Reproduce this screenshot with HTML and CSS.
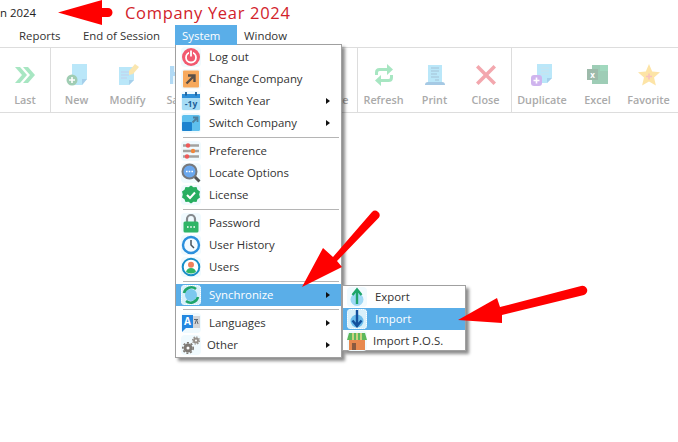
FILE: index.html
```html
<!DOCTYPE html>
<html lang="en">
<head>
  <meta charset="UTF-8">
  <title>Company Year 2024</title>
  <link rel="stylesheet" href="styles.css">
</head>
<body>

  <!-- TITLE -->
  <header class="title-row">
    <span class="title-text">n 2024</span>
    <span class="note">Company Year 2024</span>
  </header>

  <!-- MENU BAR -->
  <nav class="menubar">
    <a class="menu-reports">Reports</a>
    <a class="menu-session">End of Session</a>
    <a class="menu-system active">System</a>
    <a class="menu-window">Window</a>
  </nav>

  <!-- TOOLBAR -->
  <section class="toolbar">
    <div class="group group-last">
      <div class="tool">
        <svg viewBox="0 0 22 22"><path d="M1 3h5l7 8-7 8H1l7-8zM9 3h5l7 8-7 8H9l7-8z" fill="#2fc46f"/></svg>
        <span>Last</span>
      </div>
    </div>
    <div class="group group-edit">
      <div class="tool">
        <svg viewBox="0 0 22 22"><path d="M6 0h15v15l-5 6H6z" fill="#5cc8f2"/><path d="M16 21v-6h5z" fill="#2e8fd0"/><circle cx="6" cy="16" r="5.500" fill="#1f8a4c"/><path d="M3 16h6M6 13v6" stroke="#fff" stroke-width="1.600"/></svg>
        <span>New</span>
      </div>
      <div class="tool">
        <svg viewBox="0 0 22 22"><path d="M2 3h15v13l-5 5H2z" fill="#5cc8f2"/><path d="M12 21v-5h5z" fill="#2e8fd0"/><path d="M4 8h8M4 11h8M4 14h6" stroke="#6f8fd0" stroke-width="1.200"/><path d="M12 7l6-7 4 3-6 7-4 1z" fill="#f4c542"/></svg>
        <span>Modify</span>
      </div>
      <div class="tool">
        <svg viewBox="0 0 22 22"><path d="M2 2h15l3 3v15H2z" fill="#4aa8e8"/><path d="M6 2h9v6H6zM5 12h12v8H5z" fill="#d5effb"/></svg>
        <span>Save</span>
      </div>
      <div class="tool"></div>
      <div class="tool"></div>
      <div class="tool">
        <svg viewBox="0 0 22 22"><path d="M4 5h14l-2 16H6z" fill="#e66"/></svg>
        <span>Delete</span>
      </div>
    </div>
    <div class="group group-view">
      <div class="tool">
        <svg viewBox="0 0 22 22"><path d="M3.500 11V8.500q0-3 3-3H15M18.500 11v2.500q0 3-3 3H7" fill="none" stroke="#2fc46f" stroke-width="3"/><path d="M14 0l6 5.500-6 5.500zM8 11l-6 5.500L8 22z" fill="#2fc46f"/></svg>
        <span>Refresh</span>
      </div>
      <div class="tool">
        <svg viewBox="0 0 22 22"><path d="M4 1h14v17H4z" fill="#5cc8f2"/><path d="M7 4h8M7 7h8M7 10h6M7 13h8M11 16h4" stroke="#2b6f9b" stroke-width="1.100"/><path d="M1 21q0-3 3-3h14q3 0 3 3z" fill="#2a7fc0"/></svg>
        <span>Print</span>
      </div>
      <div class="tool">
        <svg viewBox="0 0 22 22"><path d="M3.500 1L11 8.500 18.500 1 21 3.500 13.500 11 21 18.500 18.500 21 11 13.500 3.500 21 1 18.500 8.500 11 1 3.500z" fill="#e4303f"/></svg>
        <span>Close</span>
      </div>
    </div>
    <div class="group group-extra">
      <div class="tool wide">
        <svg viewBox="0 0 22 22"><path d="M6 0h15v14l-5 5H6z" fill="#5cc8f2"/><path d="M16 19v-5h5z" fill="#2e8fd0"/><path d="M10 4h8M10 7h8M10 10h8" stroke="#8ab8cf" stroke-width="1.100"/><rect x="0" y="11" width="11" height="11" rx="3" fill="#8f4fd8"/><path d="M2.500 16.500h6M5.500 13.500v6" stroke="#fff" stroke-width="1.600"/></svg>
        <span>Duplicate</span>
      </div>
      <div class="tool">
        <svg viewBox="0 0 22 22"><path d="M5 1h16v19H5z" fill="#1a8a54"/><path d="M13 1h8v6h-8z" fill="#21a366"/><rect x="0" y="5" width="11" height="11" fill="#185c37"/><text x="5.500" y="13.500" class="xl">x</text></svg>
        <span>Excel</span>
      </div>
      <div class="tool">
        <svg viewBox="0 0 22 22"><path d="M11 0l3.200 7.500 7.800.8-6 5.200 1.900 7.900L11 17.500 4.100 21.400 6 13.500 0 8.300l7.800-.8z" fill="#fbc02d"/><path d="M8 12.500h6M11 9.500v6" stroke="#ef6b6b" stroke-width="1.600"/></svg>
        <span>Favorite</span>
      </div>
    </div>
  </section>

  <!-- SYSTEM MENU -->
  <div class="dropdown system-menu">
    <div class="item">
      <svg viewBox="0 0 20 20"><circle cx="10" cy="10" r="9" fill="#f2596f"/><circle cx="10" cy="10.500" r="5" fill="none" stroke="#fff" stroke-width="1.800"/><path d="M10 3.500v6" stroke="#f2596f" stroke-width="4"/><path d="M10 3.500v6" stroke="#fff" stroke-width="1.800"/></svg>
      <span>Log out</span>
    </div>
    <div class="item">
      <svg viewBox="0 0 20 20"><rect x="2" y="1.500" width="16" height="17" rx="1" fill="#f7a95c"/><path d="M5.500 14.500l7-7M7 6.500h6.500V13" fill="none" stroke="#5a5048" stroke-width="2.400"/></svg>
      <span>Change Company</span>
    </div>
    <div class="item sub">
      <svg viewBox="0 0 20 20"><rect x="1" y="3" width="18" height="16" rx="1" fill="#a6dcf5"/><rect x="1" y="3" width="18" height="4" fill="#2e8fd8"/><path d="M5 1v3.500M15 1v3.500" stroke="#1d5f98" stroke-width="1.800"/><text x="10" y="16" class="cal">-1y</text></svg>
      <span>Switch Year</span>
    </div>
    <div class="item sub">
      <svg viewBox="0 0 20 20"><rect x="1" y="2" width="18" height="16" rx="1.500" fill="#5fc0ee"/><rect x="1" y="9" width="10" height="9" rx="1" fill="#1c82cf"/><path d="M11.500 9.500l4-4M12 4.500h4.500V9" fill="none" stroke="#4f7f9c" stroke-width="1.800"/></svg>
      <span>Switch Company</span>
    </div>
    <hr>
    <div class="item">
      <svg viewBox="0 0 20 20"><path d="M2 4.500h16M2 10h16M2 15.500h16" stroke="#a3a3a0" stroke-width="2.400"/><circle cx="7" cy="4.500" r="2.200" fill="#ef5a5a"/><circle cx="12" cy="10" r="2.200" fill="#f0883c"/><circle cx="6" cy="15.500" r="2.200" fill="#ef5a5a"/></svg>
      <span>Preference</span>
    </div>
    <div class="item">
      <svg viewBox="0 0 20 20"><path d="M12.500 12.500l6 6" stroke="#555" stroke-width="3"/><circle cx="8.500" cy="8.500" r="7" fill="#6aa8ee" stroke="#77797c" stroke-width="2"/><path d="M5 8.500h7" stroke="#fff" stroke-width="1.600" stroke-dasharray="1.600 1.100"/></svg>
      <span>Locate Options</span>
    </div>
    <div class="item">
      <svg viewBox="0 0 20 20"><path d="M10 .5l2.500 1.700 3-.2 1 2.800 2.500 1.700-.8 3 .8 3-2.500 1.700-1 2.800-3-.2-2.500 1.700-2.500-1.700-3 .2-1-2.800L1 12.500l.8-3L1 6.500l2.500-1.700 1-2.800 3 .2z" fill="#27ae60"/><path d="M6 10l3 3 5-5.500" fill="none" stroke="#fff" stroke-width="2"/></svg>
      <span>License</span>
    </div>
    <hr>
    <div class="item">
      <svg viewBox="0 0 20 20"><path d="M6 9V6a4 4 0 0 1 8 0v3" fill="none" stroke="#85898c" stroke-width="2.200"/><rect x="2.500" y="8.500" width="15" height="11" rx="1.500" fill="#2fb567"/><path d="M6 14h8" stroke="#fff" stroke-width="1.600" stroke-dasharray="1.600 1.600"/></svg>
      <span>Password</span>
    </div>
    <div class="item">
      <svg viewBox="0 0 20 20"><circle cx="10" cy="10" r="8" fill="#f4fbff" stroke="#2b8fdc" stroke-width="2.400"/><path d="M10 5v5l3 3" fill="none" stroke="#47515a" stroke-width="1.500"/></svg>
      <span>User History</span>
    </div>
    <div class="item">
      <svg viewBox="0 0 20 20"><circle cx="10" cy="10" r="8.300" fill="#fff" stroke="#1a8fc7" stroke-width="2"/><circle cx="10" cy="7.800" r="3" fill="#f0805a"/><path d="M5 15q1-4 5-4t5 4q-5 3-10 0z" fill="#2fb567"/></svg>
      <span>Users</span>
    </div>
    <hr>
    <div class="item sub active">
      <svg class="halo" viewBox="0 0 20 20"><circle cx="10" cy="10" r="6" fill="#7cc8ef"/><path d="M3 8a7.500 7.500 0 0 1 12-4M17 12a7.500 7.500 0 0 1-12 4" fill="none" stroke="#1fa56b" stroke-width="2.600"/></svg>
      <span>Synchronize</span>
    </div>
    <hr>
    <div class="item sub">
      <svg viewBox="0 0 20 20"><path d="M11 3h8v12h-8z" fill="#d3d5d8"/><path d="M13 6.500h4M14 11l1.500-4.500L17 11" fill="none" stroke="#62686e" stroke-width="1"/><path d="M1 2h11v13H5l-4 4z" fill="#2487e0"/><text x="6.500" y="12" class="lang">A</text></svg>
      <span>Languages</span>
    </div>
    <div class="item sub other">
      <svg viewBox="0 0 20 20"><circle cx="7" cy="13" r="3" fill="#fff" stroke="#7d7974" stroke-width="3"/><circle cx="7" cy="13" r="5.200" fill="none" stroke="#7d7974" stroke-width="1.600" stroke-dasharray="2 1.800"/><circle cx="15" cy="5.500" r="2" fill="#fff" stroke="#96918b" stroke-width="2"/><circle cx="15" cy="5.500" r="3.500" fill="none" stroke="#96918b" stroke-width="1.200" stroke-dasharray="1.500 1.200"/></svg>
      <span>Other</span>
    </div>
  </div>

  <!-- SYNCHRONIZE SUBMENU -->
  <div class="dropdown sync-menu">
    <div class="item">
      <svg viewBox="0 0 20 20"><circle cx="10" cy="12.500" r="6.500" fill="#9ed8f5"/><path d="M10 17V4M5.500 8L10 2.500 14.500 8" fill="none" stroke="#1fa56b" stroke-width="2.400"/></svg>
      <span>Export</span>
    </div>
    <div class="item active">
      <svg class="halo" viewBox="0 0 20 20"><circle cx="10" cy="12" r="6.500" fill="#6cbdec"/><path d="M10 1v15M5.500 11.500L10 17l4.500-5.500" fill="none" stroke="#14509c" stroke-width="2.400"/></svg>
      <span>Import</span>
    </div>
    <div class="item pos">
      <svg viewBox="0 0 20 20"><rect x="2" y="9" width="16" height="10" fill="#e8894f"/><rect x="5" y="12" width="4" height="7" fill="#8a5a40"/><path d="M2 2h16l2 7H0z" fill="#5cb85c"/><path d="M6 2v7M10 2v7M14 2v7" stroke="#f2d98a" stroke-width="1.500"/></svg>
      <span>Import P.O.S.</span>
    </div>
  </div>

  <!-- RED ARROWS -->
  <svg class="arrows" width="678" height="442" viewBox="0 0 678 442">
    <path d="M58 12.500L102 0V8h6a4.500 4.500 0 0 1 0 9h-6v8z" fill="#f00"/>
    <path d="M302 287L323 248l10 9 39-45a4.500 4.500 0 0 1 7 5.500L337 261l5 6z" fill="#f00"/>
    <path d="M458 320L497 298l3 9 81-21a4.700 4.700 0 0 1 3 9L502 315v8z" fill="#f00"/>
  </svg>

</body>
</html>
```

FILE: styles.css
```css
body {
  margin: 0;
  font-family: 'Open Sans', sans-serif;
  font-size: 11.4px;
  color: #222;
  background: white;
  width: 678px;
  height: 442px;
  overflow: hidden;
  position: relative;
}

/* Title */
.title-row {
  height: 25px;
  display: flex;
  align-items: center;
}

.title-text {
  width: 125px;
  flex: none;
}

.note {
  font-size: 16.5px;
  letter-spacing: 0.68px;
  color: #d2222a;
}

/* Menu bar */
.menubar {
  height: 19px;
  display: flex;
  line-height: 21px;
  color: #333;
}

.menubar a {
  display: block;
}

.menu-reports {
  margin-left: 19px;
  width: 64px;
}

.menu-session {
  width: 92px;
}

.menu-system {
  width: 62px;
  padding-left: 7px;
  box-sizing: border-box;
}

.menu-window {
  margin-left: 7px;
}

.menubar .active {
  background: #5aaee8;
  color: white;
}

/* Toolbar */
.toolbar {
  margin-top: 3px;
  height: 64px;
  display: flex;
  border-top: 1px solid #ddd;
  border-bottom: 1px solid #ddd;
}

.group {
  display: flex;
  border-right: 1px solid #ddd;
}

.group-extra {
  border-right: none;
}

.tool {
  width: 51px;
  display: flex;
  flex-direction: column;
  align-items: center;
  padding-top: 16px;
  box-sizing: border-box;
}

.group-last .tool {
  width: 50px;
}

.tool.wide {
  width: 60px;
}

.tool svg {
  width: 22px;
  height: 22px;
  opacity: 0.42;
}

.tool span {
  margin-top: 6px;
  font-size: 10.8px;
  font-weight: 600;
  color: #aaa;
}

.xl {
  font: bold 8px 'Open Sans', sans-serif;
  fill: white;
  text-anchor: middle;
}

/* Dropdowns */
.dropdown {
  position: absolute;
  background: white;
  border: 1px solid #a0a0a0;
  box-shadow: 3px 3px 3px rgba(0, 0, 0, 0.45);
  box-sizing: border-box;
}

.system-menu {
  left: 175px;
  top: 44px;
  width: 167px;
  height: 314px;
  padding-top: 1px;
}

.system-menu::before {
  content: "";
  position: absolute;
  left: -1px;
  top: -1px;
  width: 62px;
  height: 1px;
  background: #5aaee8;
}

.sync-menu {
  left: 342px;
  top: 285px;
  width: 124px;
  height: 66px;
}

.item {
  height: 22px;
  display: flex;
  align-items: center;
  padding-left: 5px;
  position: relative;
  color: #333;
}

.item span {
  margin-bottom: 2px;
}

.item svg {
  width: 20px;
  height: 20px;
  margin-right: 8px;
  flex: none;
  background: #f0fafe;
  border-radius: 4px;
}

.sync-menu .item {
  padding-left: 4px;
}

.item.other span,
.sync-menu .pos span {
  margin-left: -2px;
}

.item.active {
  background: #5aaee8;
  color: white;
}

.item svg.halo {
  background: #d8f0fa;
  outline: 1px dotted #fff;
  outline-offset: -1px;
}

.item.sub::after {
  content: "";
  position: absolute;
  right: 11px;
  top: 8px;
  border-left: 4px solid #111;
  border-top: 3.5px solid transparent;
  border-bottom: 3.5px solid transparent;
}

.dropdown hr {
  margin: 2.500px 2px 2.500px 7px;
  border: none;
  border-top: 1px solid #b5b5b5;
}

.cal {
  font: bold 8.500px 'Open Sans', sans-serif;
  fill: #1d5f98;
  text-anchor: middle;
}

.lang {
  font: bold 10px 'Open Sans', sans-serif;
  fill: white;
  text-anchor: middle;
}

/* Red arrows drawn over the page */
.arrows {
  position: absolute;
  left: 0;
  top: 0;
  pointer-events: none;
}
```
